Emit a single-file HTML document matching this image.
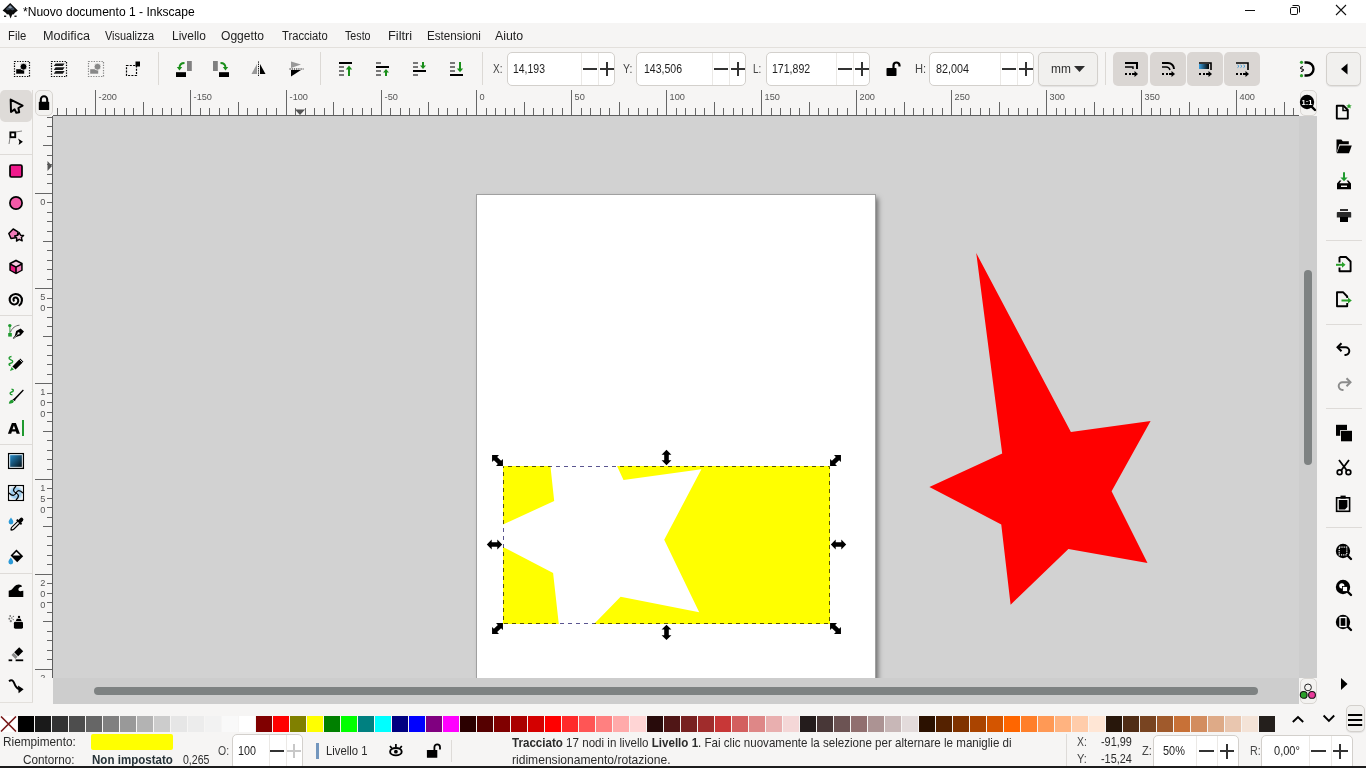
<!DOCTYPE html><html><head><meta charset="utf-8"><style>
html,body{margin:0;padding:0;width:1366px;height:768px;overflow:hidden;background:#f6f5f4;font-family:"Liberation Sans",sans-serif}
body{position:relative}
</style></head><body>
<div style="position:absolute;left:0px;top:0px;width:1366px;height:23px;background:#ffffff;"></div>
<div style="position:absolute;left:0px;top:23px;width:1366px;height:745px;background:#f6f5f4;"></div>
<div style="position:absolute;left:0px;top:47px;width:1366px;height:1px;background:#e3e0dc;"></div>
<svg style="position:absolute;left:2px;top:2px" width="17" height="17" viewBox="0 0 17 17"><path d="M8.2 1 L15.8 8.4 L12.6 11 L12 12.2 L10.2 12.4 L8.6 16.4 L7 12.4 L4.8 12.2 L4 11 L0.6 8.4 Z" fill="#0b0b0b"/>
<path d="M8.2 2.8 L12.8 7.3 L10.5 8.6 L8.2 7.2 L5.9 8.6 L3.6 7.3Z" fill="#3d4a5a"/><path d="M8.2 3.6 L10.2 5.6 L8.2 6.4 L6.2 5.6Z" fill="#8a98a8"/>
<rect x="2" y="13.6" width="2.2" height="1.3" fill="#111"/><rect x="12.4" y="13.6" width="2.2" height="1.3" fill="#111"/></svg>
<div id="t0" style="position:absolute;left:23.4px;top:5.60px;font-size:12.4px;line-height:12.4px;font-weight:400;color:#000;white-space:nowrap;transform:scaleX(0.9737);transform-origin:0 0;">*Nuovo documento 1 - Inkscape</div>
<div style="position:absolute;left:1245px;top:10px;width:10px;height:1px;background:#111;"></div>
<svg style="position:absolute;left:1289px;top:4px" width="12" height="12" viewBox="0 0 12 12"><rect x="1.5" y="3.5" width="7" height="7" rx="1.2" fill="none" stroke="#111" stroke-width="1"/><path d="M3.5 1.5 H9 a1.5 1.5 0 0 1 1.5 1.5 V8.5" fill="none" stroke="#111" stroke-width="1"/></svg>
<svg style="position:absolute;left:1335px;top:4px" width="12" height="12" viewBox="0 0 12 12"><path d="M1 1 L11 11 M11 1 L1 11" stroke="#111" stroke-width="1.1"/></svg>
<div id="t1" style="position:absolute;left:8.3px;top:29.69px;font-size:12.3px;line-height:12.3px;font-weight:400;color:#1e1e1e;white-space:nowrap;transform:scaleX(0.9170);transform-origin:0 0;">File</div>
<div id="t2" style="position:absolute;left:42.5px;top:29.69px;font-size:12.3px;line-height:12.3px;font-weight:400;color:#1e1e1e;white-space:nowrap;transform:scaleX(1.0256);transform-origin:0 0;">Modifica</div>
<div id="t3" style="position:absolute;left:105.4px;top:29.69px;font-size:12.3px;line-height:12.3px;font-weight:400;color:#1e1e1e;white-space:nowrap;transform:scaleX(0.8897);transform-origin:0 0;">Visualizza</div>
<div id="t4" style="position:absolute;left:171.6px;top:29.69px;font-size:12.3px;line-height:12.3px;font-weight:400;color:#1e1e1e;white-space:nowrap;transform:scaleX(0.9700);transform-origin:0 0;">Livello</div>
<div id="t5" style="position:absolute;left:221.4px;top:29.69px;font-size:12.3px;line-height:12.3px;font-weight:400;color:#1e1e1e;white-space:nowrap;transform:scaleX(0.9814);transform-origin:0 0;">Oggetto</div>
<div id="t6" style="position:absolute;left:281.9px;top:29.69px;font-size:12.3px;line-height:12.3px;font-weight:400;color:#1e1e1e;white-space:nowrap;transform:scaleX(0.9110);transform-origin:0 0;">Tracciato</div>
<div id="t7" style="position:absolute;left:345.1px;top:29.69px;font-size:12.3px;line-height:12.3px;font-weight:400;color:#1e1e1e;white-space:nowrap;transform:scaleX(0.8697);transform-origin:0 0;">Testo</div>
<div id="t8" style="position:absolute;left:387.6px;top:29.69px;font-size:12.3px;line-height:12.3px;font-weight:400;color:#1e1e1e;white-space:nowrap;transform:scaleX(1.0425);transform-origin:0 0;">Filtri</div>
<div id="t9" style="position:absolute;left:426.7px;top:29.69px;font-size:12.3px;line-height:12.3px;font-weight:400;color:#1e1e1e;white-space:nowrap;transform:scaleX(0.9490);transform-origin:0 0;">Estensioni</div>
<div id="t10" style="position:absolute;left:495.3px;top:29.69px;font-size:12.3px;line-height:12.3px;font-weight:400;color:#1e1e1e;white-space:nowrap;transform:scaleX(1.0039);transform-origin:0 0;">Aiuto</div>
<div style="position:absolute;left:53px;top:116px;width:1246px;height:562px;background:#d2d2d2;"></div>
<div style="position:absolute;left:1299px;top:116px;width:18px;height:562px;background:#cdcdcd;"></div>
<div style="position:absolute;left:53px;top:678px;width:1246px;height:26px;background:#cdcdcd;"></div>
<div style="position:absolute;left:1304px;top:269.5px;width:8px;height:195.5px;background:#7e8282;border-radius:4px"></div>
<div style="position:absolute;left:94px;top:687px;width:1164px;height:8px;background:#7e8282;border-radius:4px"></div>
<div style="position:absolute;left:53px;top:116px;width:1246px;height:562px;overflow:hidden">
<div style="position:absolute;left:423px;top:78px;width:398px;height:566px;background:#fff;border:1px solid #a0a0a0;box-shadow:3px 3px 5px -1px rgba(0,0,0,0.5)"></div>
</div>
<svg style="position:absolute;left:0px;top:0px" width="1366" height="768" viewBox="0 0 1366 768"><defs><clipPath id="rc"><rect x="503" y="466" width="327" height="158"/></clipPath></defs>
<rect x="503" y="466" width="327" height="158" fill="#ffff00"/>
<polygon clip-path="url(#rc)" points="547.6,440 554.2,501 480,535 553.1,572.9 561.7,650 568.6,650 620.6,596.8 699.2,612.3 664.2,539.7 701.4,469.3 623.5,479.9 595.6,420" fill="#fff"/>
<polygon points="976.25,253.1 1070.9,432 1150.6,421.1 1111.6,491.25 1147.5,563.1 1068.4,549.1 1010.6,604.7 1001.25,524.4 929.4,486.9 1002.2,453.6" fill="#ff0000"/>
<rect x="503.5" y="466.5" width="326" height="157" fill="none" stroke="#5a5590" stroke-width="1" stroke-dasharray="4 4" stroke-dashoffset="3.5" style="mix-blend-mode:multiply"/>
</svg>
<svg style="position:absolute;left:0px;top:0px" width="1366" height="768" viewBox="0 0 1366 768"><path d="M0,-7.7 L4.9,-2.8 L2.3,-2.8 L2.3,2.8 L4.9,2.8 L0,7.7 L-4.9,2.8 L-2.3,2.8 L-2.3,-2.8 L-4.9,-2.8 Z" fill="#000" transform="translate(497.5,460.5) rotate(-45)"/><path d="M0,-7.7 L4.9,-2.8 L2.3,-2.8 L2.3,2.8 L4.9,2.8 L0,7.7 L-4.9,2.8 L-2.3,2.8 L-2.3,-2.8 L-4.9,-2.8 Z" fill="#000" transform="translate(835.5,460.5) rotate(45)"/><path d="M0,-7.7 L4.9,-2.8 L2.3,-2.8 L2.3,2.8 L4.9,2.8 L0,7.7 L-4.9,2.8 L-2.3,2.8 L-2.3,-2.8 L-4.9,-2.8 Z" fill="#000" transform="translate(497.5,628.5) rotate(45)"/><path d="M0,-7.7 L4.9,-2.8 L2.3,-2.8 L2.3,2.8 L4.9,2.8 L0,7.7 L-4.9,2.8 L-2.3,2.8 L-2.3,-2.8 L-4.9,-2.8 Z" fill="#000" transform="translate(835.5,628.5) rotate(-45)"/><path d="M0,-7.7 L4.9,-2.8 L2.3,-2.8 L2.3,2.8 L4.9,2.8 L0,7.7 L-4.9,2.8 L-2.3,2.8 L-2.3,-2.8 L-4.9,-2.8 Z" fill="#000" transform="translate(666.5,457.5) rotate(0)"/><path d="M0,-7.7 L4.9,-2.8 L2.3,-2.8 L2.3,2.8 L4.9,2.8 L0,7.7 L-4.9,2.8 L-2.3,2.8 L-2.3,-2.8 L-4.9,-2.8 Z" fill="#000" transform="translate(666.5,632.4) rotate(0)"/><path d="M0,-7.7 L4.9,-2.8 L2.3,-2.8 L2.3,2.8 L4.9,2.8 L0,7.7 L-4.9,2.8 L-2.3,2.8 L-2.3,-2.8 L-4.9,-2.8 Z" fill="#000" transform="translate(494.5,544.5) rotate(90)"/><path d="M0,-7.7 L4.9,-2.8 L2.3,-2.8 L2.3,2.8 L4.9,2.8 L0,7.7 L-4.9,2.8 L-2.3,2.8 L-2.3,-2.8 L-4.9,-2.8 Z" fill="#000" transform="translate(838.5,544.5) rotate(90)"/></svg>
<div style="position:absolute;left:32px;top:90px;width:1px;height:613px;background:#dddad6;"></div>
<div style="position:absolute;left:0px;top:702px;width:33px;height:1px;background:#e3e0dc;"></div>
<div style="position:absolute;left:0px;top:90px;width:31.5px;height:31.5px;background:#dedbd8;border-radius:5px"></div>
<div style="position:absolute;left:0px;top:154px;width:32px;height:1px;background:#dedbd8;"></div>
<div style="position:absolute;left:0px;top:315px;width:32px;height:1px;background:#dedbd8;"></div>
<div style="position:absolute;left:0px;top:444px;width:32px;height:1px;background:#dedbd8;"></div>
<div style="position:absolute;left:0px;top:573px;width:32px;height:1px;background:#dedbd8;"></div>
<svg style="position:absolute;left:0px;top:0px" width="1366" height="768" viewBox="0 0 1366 768"><rect x="53" y="115" width="1246" height="1" fill="#5e5e5e"/><rect x="52" y="116" width="1" height="562" fill="#5e5e5e"/><line x1="57.5" y1="108" x2="57.5" y2="115" stroke="#666" stroke-width="1"/><line x1="66.5" y1="108" x2="66.5" y2="115" stroke="#666" stroke-width="1"/><line x1="76.5" y1="108" x2="76.5" y2="115" stroke="#666" stroke-width="1"/><line x1="85.5" y1="108" x2="85.5" y2="115" stroke="#666" stroke-width="1"/><line x1="95.5" y1="90" x2="95.5" y2="115" stroke="#666" stroke-width="1"/><line x1="105.5" y1="108" x2="105.5" y2="115" stroke="#666" stroke-width="1"/><line x1="114.5" y1="108" x2="114.5" y2="115" stroke="#666" stroke-width="1"/><line x1="124.5" y1="108" x2="124.5" y2="115" stroke="#666" stroke-width="1"/><line x1="133.5" y1="108" x2="133.5" y2="115" stroke="#666" stroke-width="1"/><line x1="143.5" y1="102" x2="143.5" y2="115" stroke="#666" stroke-width="1"/><line x1="152.5" y1="108" x2="152.5" y2="115" stroke="#666" stroke-width="1"/><line x1="162.5" y1="108" x2="162.5" y2="115" stroke="#666" stroke-width="1"/><line x1="171.5" y1="108" x2="171.5" y2="115" stroke="#666" stroke-width="1"/><line x1="181.5" y1="108" x2="181.5" y2="115" stroke="#666" stroke-width="1"/><line x1="190.5" y1="90" x2="190.5" y2="115" stroke="#666" stroke-width="1"/><line x1="200.5" y1="108" x2="200.5" y2="115" stroke="#666" stroke-width="1"/><line x1="209.5" y1="108" x2="209.5" y2="115" stroke="#666" stroke-width="1"/><line x1="219.5" y1="108" x2="219.5" y2="115" stroke="#666" stroke-width="1"/><line x1="228.5" y1="108" x2="228.5" y2="115" stroke="#666" stroke-width="1"/><line x1="238.5" y1="102" x2="238.5" y2="115" stroke="#666" stroke-width="1"/><line x1="247.5" y1="108" x2="247.5" y2="115" stroke="#666" stroke-width="1"/><line x1="257.5" y1="108" x2="257.5" y2="115" stroke="#666" stroke-width="1"/><line x1="266.5" y1="108" x2="266.5" y2="115" stroke="#666" stroke-width="1"/><line x1="276.5" y1="108" x2="276.5" y2="115" stroke="#666" stroke-width="1"/><line x1="286.5" y1="90" x2="286.5" y2="115" stroke="#666" stroke-width="1"/><line x1="295.5" y1="108" x2="295.5" y2="115" stroke="#666" stroke-width="1"/><line x1="305.5" y1="108" x2="305.5" y2="115" stroke="#666" stroke-width="1"/><line x1="314.5" y1="108" x2="314.5" y2="115" stroke="#666" stroke-width="1"/><line x1="324.5" y1="108" x2="324.5" y2="115" stroke="#666" stroke-width="1"/><line x1="333.5" y1="102" x2="333.5" y2="115" stroke="#666" stroke-width="1"/><line x1="343.5" y1="108" x2="343.5" y2="115" stroke="#666" stroke-width="1"/><line x1="352.5" y1="108" x2="352.5" y2="115" stroke="#666" stroke-width="1"/><line x1="362.5" y1="108" x2="362.5" y2="115" stroke="#666" stroke-width="1"/><line x1="371.5" y1="108" x2="371.5" y2="115" stroke="#666" stroke-width="1"/><line x1="381.5" y1="90" x2="381.5" y2="115" stroke="#666" stroke-width="1"/><line x1="390.5" y1="108" x2="390.5" y2="115" stroke="#666" stroke-width="1"/><line x1="400.5" y1="108" x2="400.5" y2="115" stroke="#666" stroke-width="1"/><line x1="409.5" y1="108" x2="409.5" y2="115" stroke="#666" stroke-width="1"/><line x1="419.5" y1="108" x2="419.5" y2="115" stroke="#666" stroke-width="1"/><line x1="428.5" y1="102" x2="428.5" y2="115" stroke="#666" stroke-width="1"/><line x1="438.5" y1="108" x2="438.5" y2="115" stroke="#666" stroke-width="1"/><line x1="447.5" y1="108" x2="447.5" y2="115" stroke="#666" stroke-width="1"/><line x1="457.5" y1="108" x2="457.5" y2="115" stroke="#666" stroke-width="1"/><line x1="466.5" y1="108" x2="466.5" y2="115" stroke="#666" stroke-width="1"/><line x1="476.5" y1="90" x2="476.5" y2="115" stroke="#666" stroke-width="1"/><line x1="486.5" y1="108" x2="486.5" y2="115" stroke="#666" stroke-width="1"/><line x1="495.5" y1="108" x2="495.5" y2="115" stroke="#666" stroke-width="1"/><line x1="505.5" y1="108" x2="505.5" y2="115" stroke="#666" stroke-width="1"/><line x1="514.5" y1="108" x2="514.5" y2="115" stroke="#666" stroke-width="1"/><line x1="524.5" y1="102" x2="524.5" y2="115" stroke="#666" stroke-width="1"/><line x1="533.5" y1="108" x2="533.5" y2="115" stroke="#666" stroke-width="1"/><line x1="543.5" y1="108" x2="543.5" y2="115" stroke="#666" stroke-width="1"/><line x1="552.5" y1="108" x2="552.5" y2="115" stroke="#666" stroke-width="1"/><line x1="562.5" y1="108" x2="562.5" y2="115" stroke="#666" stroke-width="1"/><line x1="571.5" y1="90" x2="571.5" y2="115" stroke="#666" stroke-width="1"/><line x1="581.5" y1="108" x2="581.5" y2="115" stroke="#666" stroke-width="1"/><line x1="590.5" y1="108" x2="590.5" y2="115" stroke="#666" stroke-width="1"/><line x1="600.5" y1="108" x2="600.5" y2="115" stroke="#666" stroke-width="1"/><line x1="609.5" y1="108" x2="609.5" y2="115" stroke="#666" stroke-width="1"/><line x1="619.5" y1="102" x2="619.5" y2="115" stroke="#666" stroke-width="1"/><line x1="628.5" y1="108" x2="628.5" y2="115" stroke="#666" stroke-width="1"/><line x1="638.5" y1="108" x2="638.5" y2="115" stroke="#666" stroke-width="1"/><line x1="647.5" y1="108" x2="647.5" y2="115" stroke="#666" stroke-width="1"/><line x1="657.5" y1="108" x2="657.5" y2="115" stroke="#666" stroke-width="1"/><line x1="666.5" y1="90" x2="666.5" y2="115" stroke="#666" stroke-width="1"/><line x1="676.5" y1="108" x2="676.5" y2="115" stroke="#666" stroke-width="1"/><line x1="685.5" y1="108" x2="685.5" y2="115" stroke="#666" stroke-width="1"/><line x1="695.5" y1="108" x2="695.5" y2="115" stroke="#666" stroke-width="1"/><line x1="704.5" y1="108" x2="704.5" y2="115" stroke="#666" stroke-width="1"/><line x1="714.5" y1="102" x2="714.5" y2="115" stroke="#666" stroke-width="1"/><line x1="723.5" y1="108" x2="723.5" y2="115" stroke="#666" stroke-width="1"/><line x1="733.5" y1="108" x2="733.5" y2="115" stroke="#666" stroke-width="1"/><line x1="742.5" y1="108" x2="742.5" y2="115" stroke="#666" stroke-width="1"/><line x1="752.5" y1="108" x2="752.5" y2="115" stroke="#666" stroke-width="1"/><line x1="761.5" y1="90" x2="761.5" y2="115" stroke="#666" stroke-width="1"/><line x1="771.5" y1="108" x2="771.5" y2="115" stroke="#666" stroke-width="1"/><line x1="780.5" y1="108" x2="780.5" y2="115" stroke="#666" stroke-width="1"/><line x1="790.5" y1="108" x2="790.5" y2="115" stroke="#666" stroke-width="1"/><line x1="799.5" y1="108" x2="799.5" y2="115" stroke="#666" stroke-width="1"/><line x1="809.5" y1="102" x2="809.5" y2="115" stroke="#666" stroke-width="1"/><line x1="818.5" y1="108" x2="818.5" y2="115" stroke="#666" stroke-width="1"/><line x1="828.5" y1="108" x2="828.5" y2="115" stroke="#666" stroke-width="1"/><line x1="837.5" y1="108" x2="837.5" y2="115" stroke="#666" stroke-width="1"/><line x1="847.5" y1="108" x2="847.5" y2="115" stroke="#666" stroke-width="1"/><line x1="856.5" y1="90" x2="856.5" y2="115" stroke="#666" stroke-width="1"/><line x1="866.5" y1="108" x2="866.5" y2="115" stroke="#666" stroke-width="1"/><line x1="875.5" y1="108" x2="875.5" y2="115" stroke="#666" stroke-width="1"/><line x1="885.5" y1="108" x2="885.5" y2="115" stroke="#666" stroke-width="1"/><line x1="894.5" y1="108" x2="894.5" y2="115" stroke="#666" stroke-width="1"/><line x1="904.5" y1="102" x2="904.5" y2="115" stroke="#666" stroke-width="1"/><line x1="913.5" y1="108" x2="913.5" y2="115" stroke="#666" stroke-width="1"/><line x1="923.5" y1="108" x2="923.5" y2="115" stroke="#666" stroke-width="1"/><line x1="932.5" y1="108" x2="932.5" y2="115" stroke="#666" stroke-width="1"/><line x1="942.5" y1="108" x2="942.5" y2="115" stroke="#666" stroke-width="1"/><line x1="951.5" y1="90" x2="951.5" y2="115" stroke="#666" stroke-width="1"/><line x1="961.5" y1="108" x2="961.5" y2="115" stroke="#666" stroke-width="1"/><line x1="970.5" y1="108" x2="970.5" y2="115" stroke="#666" stroke-width="1"/><line x1="980.5" y1="108" x2="980.5" y2="115" stroke="#666" stroke-width="1"/><line x1="989.5" y1="108" x2="989.5" y2="115" stroke="#666" stroke-width="1"/><line x1="999.5" y1="102" x2="999.5" y2="115" stroke="#666" stroke-width="1"/><line x1="1008.5" y1="108" x2="1008.5" y2="115" stroke="#666" stroke-width="1"/><line x1="1018.5" y1="108" x2="1018.5" y2="115" stroke="#666" stroke-width="1"/><line x1="1027.5" y1="108" x2="1027.5" y2="115" stroke="#666" stroke-width="1"/><line x1="1037.5" y1="108" x2="1037.5" y2="115" stroke="#666" stroke-width="1"/><line x1="1046.5" y1="90" x2="1046.5" y2="115" stroke="#666" stroke-width="1"/><line x1="1056.5" y1="108" x2="1056.5" y2="115" stroke="#666" stroke-width="1"/><line x1="1065.5" y1="108" x2="1065.5" y2="115" stroke="#666" stroke-width="1"/><line x1="1075.5" y1="108" x2="1075.5" y2="115" stroke="#666" stroke-width="1"/><line x1="1084.5" y1="108" x2="1084.5" y2="115" stroke="#666" stroke-width="1"/><line x1="1094.5" y1="102" x2="1094.5" y2="115" stroke="#666" stroke-width="1"/><line x1="1103.5" y1="108" x2="1103.5" y2="115" stroke="#666" stroke-width="1"/><line x1="1113.5" y1="108" x2="1113.5" y2="115" stroke="#666" stroke-width="1"/><line x1="1122.5" y1="108" x2="1122.5" y2="115" stroke="#666" stroke-width="1"/><line x1="1132.5" y1="108" x2="1132.5" y2="115" stroke="#666" stroke-width="1"/><line x1="1141.5" y1="90" x2="1141.5" y2="115" stroke="#666" stroke-width="1"/><line x1="1151.5" y1="108" x2="1151.5" y2="115" stroke="#666" stroke-width="1"/><line x1="1160.5" y1="108" x2="1160.5" y2="115" stroke="#666" stroke-width="1"/><line x1="1170.5" y1="108" x2="1170.5" y2="115" stroke="#666" stroke-width="1"/><line x1="1179.5" y1="108" x2="1179.5" y2="115" stroke="#666" stroke-width="1"/><line x1="1189.5" y1="102" x2="1189.5" y2="115" stroke="#666" stroke-width="1"/><line x1="1198.5" y1="108" x2="1198.5" y2="115" stroke="#666" stroke-width="1"/><line x1="1208.5" y1="108" x2="1208.5" y2="115" stroke="#666" stroke-width="1"/><line x1="1217.5" y1="108" x2="1217.5" y2="115" stroke="#666" stroke-width="1"/><line x1="1227.5" y1="108" x2="1227.5" y2="115" stroke="#666" stroke-width="1"/><line x1="1236.5" y1="90" x2="1236.5" y2="115" stroke="#666" stroke-width="1"/><line x1="1246.5" y1="108" x2="1246.5" y2="115" stroke="#666" stroke-width="1"/><line x1="1255.5" y1="108" x2="1255.5" y2="115" stroke="#666" stroke-width="1"/><line x1="1265.5" y1="108" x2="1265.5" y2="115" stroke="#666" stroke-width="1"/><line x1="1274.5" y1="108" x2="1274.5" y2="115" stroke="#666" stroke-width="1"/><line x1="1284.5" y1="102" x2="1284.5" y2="115" stroke="#666" stroke-width="1"/><line x1="1293.5" y1="108" x2="1293.5" y2="115" stroke="#666" stroke-width="1"/><line x1="47" y1="117.5" x2="52" y2="117.5" stroke="#666" stroke-width="1"/><line x1="47" y1="126.5" x2="52" y2="126.5" stroke="#666" stroke-width="1"/><line x1="47" y1="136.5" x2="52" y2="136.5" stroke="#666" stroke-width="1"/><line x1="43" y1="145.5" x2="52" y2="145.5" stroke="#666" stroke-width="1"/><line x1="47" y1="155.5" x2="52" y2="155.5" stroke="#666" stroke-width="1"/><line x1="47" y1="164.5" x2="52" y2="164.5" stroke="#666" stroke-width="1"/><line x1="47" y1="174.5" x2="52" y2="174.5" stroke="#666" stroke-width="1"/><line x1="47" y1="183.5" x2="52" y2="183.5" stroke="#666" stroke-width="1"/><line x1="35" y1="193.5" x2="52" y2="193.5" stroke="#666" stroke-width="1"/><line x1="47" y1="202.5" x2="52" y2="202.5" stroke="#666" stroke-width="1"/><line x1="47" y1="212.5" x2="52" y2="212.5" stroke="#666" stroke-width="1"/><line x1="47" y1="221.5" x2="52" y2="221.5" stroke="#666" stroke-width="1"/><line x1="47" y1="231.5" x2="52" y2="231.5" stroke="#666" stroke-width="1"/><line x1="43" y1="241.5" x2="52" y2="241.5" stroke="#666" stroke-width="1"/><line x1="47" y1="250.5" x2="52" y2="250.5" stroke="#666" stroke-width="1"/><line x1="47" y1="260.5" x2="52" y2="260.5" stroke="#666" stroke-width="1"/><line x1="47" y1="269.5" x2="52" y2="269.5" stroke="#666" stroke-width="1"/><line x1="47" y1="279.5" x2="52" y2="279.5" stroke="#666" stroke-width="1"/><line x1="35" y1="288.5" x2="52" y2="288.5" stroke="#666" stroke-width="1"/><line x1="47" y1="298.5" x2="52" y2="298.5" stroke="#666" stroke-width="1"/><line x1="47" y1="307.5" x2="52" y2="307.5" stroke="#666" stroke-width="1"/><line x1="47" y1="317.5" x2="52" y2="317.5" stroke="#666" stroke-width="1"/><line x1="47" y1="326.5" x2="52" y2="326.5" stroke="#666" stroke-width="1"/><line x1="43" y1="336.5" x2="52" y2="336.5" stroke="#666" stroke-width="1"/><line x1="47" y1="345.5" x2="52" y2="345.5" stroke="#666" stroke-width="1"/><line x1="47" y1="355.5" x2="52" y2="355.5" stroke="#666" stroke-width="1"/><line x1="47" y1="364.5" x2="52" y2="364.5" stroke="#666" stroke-width="1"/><line x1="47" y1="374.5" x2="52" y2="374.5" stroke="#666" stroke-width="1"/><line x1="35" y1="383.5" x2="52" y2="383.5" stroke="#666" stroke-width="1"/><line x1="47" y1="393.5" x2="52" y2="393.5" stroke="#666" stroke-width="1"/><line x1="47" y1="402.5" x2="52" y2="402.5" stroke="#666" stroke-width="1"/><line x1="47" y1="412.5" x2="52" y2="412.5" stroke="#666" stroke-width="1"/><line x1="47" y1="421.5" x2="52" y2="421.5" stroke="#666" stroke-width="1"/><line x1="43" y1="431.5" x2="52" y2="431.5" stroke="#666" stroke-width="1"/><line x1="47" y1="440.5" x2="52" y2="440.5" stroke="#666" stroke-width="1"/><line x1="47" y1="450.5" x2="52" y2="450.5" stroke="#666" stroke-width="1"/><line x1="47" y1="459.5" x2="52" y2="459.5" stroke="#666" stroke-width="1"/><line x1="47" y1="469.5" x2="52" y2="469.5" stroke="#666" stroke-width="1"/><line x1="35" y1="479.5" x2="52" y2="479.5" stroke="#666" stroke-width="1"/><line x1="47" y1="488.5" x2="52" y2="488.5" stroke="#666" stroke-width="1"/><line x1="47" y1="498.5" x2="52" y2="498.5" stroke="#666" stroke-width="1"/><line x1="47" y1="507.5" x2="52" y2="507.5" stroke="#666" stroke-width="1"/><line x1="47" y1="517.5" x2="52" y2="517.5" stroke="#666" stroke-width="1"/><line x1="43" y1="526.5" x2="52" y2="526.5" stroke="#666" stroke-width="1"/><line x1="47" y1="536.5" x2="52" y2="536.5" stroke="#666" stroke-width="1"/><line x1="47" y1="545.5" x2="52" y2="545.5" stroke="#666" stroke-width="1"/><line x1="47" y1="555.5" x2="52" y2="555.5" stroke="#666" stroke-width="1"/><line x1="47" y1="564.5" x2="52" y2="564.5" stroke="#666" stroke-width="1"/><line x1="35" y1="574.5" x2="52" y2="574.5" stroke="#666" stroke-width="1"/><line x1="47" y1="583.5" x2="52" y2="583.5" stroke="#666" stroke-width="1"/><line x1="47" y1="593.5" x2="52" y2="593.5" stroke="#666" stroke-width="1"/><line x1="47" y1="602.5" x2="52" y2="602.5" stroke="#666" stroke-width="1"/><line x1="47" y1="612.5" x2="52" y2="612.5" stroke="#666" stroke-width="1"/><line x1="43" y1="621.5" x2="52" y2="621.5" stroke="#666" stroke-width="1"/><line x1="47" y1="631.5" x2="52" y2="631.5" stroke="#666" stroke-width="1"/><line x1="47" y1="640.5" x2="52" y2="640.5" stroke="#666" stroke-width="1"/><line x1="47" y1="650.5" x2="52" y2="650.5" stroke="#666" stroke-width="1"/><line x1="47" y1="659.5" x2="52" y2="659.5" stroke="#666" stroke-width="1"/><line x1="35" y1="669.5" x2="52" y2="669.5" stroke="#666" stroke-width="1"/></svg>
<div id="t11" style="position:absolute;left:98.6px;top:93.01px;font-size:9.2px;line-height:9.2px;font-weight:400;color:#555;white-space:nowrap;">-200</div>
<div id="t12" style="position:absolute;left:193.6px;top:93.01px;font-size:9.2px;line-height:9.2px;font-weight:400;color:#555;white-space:nowrap;">-150</div>
<div id="t13" style="position:absolute;left:289.6px;top:93.01px;font-size:9.2px;line-height:9.2px;font-weight:400;color:#555;white-space:nowrap;">-100</div>
<div id="t14" style="position:absolute;left:384.6px;top:93.01px;font-size:9.2px;line-height:9.2px;font-weight:400;color:#555;white-space:nowrap;">-50</div>
<div id="t15" style="position:absolute;left:479.6px;top:93.01px;font-size:9.2px;line-height:9.2px;font-weight:400;color:#555;white-space:nowrap;">0</div>
<div id="t16" style="position:absolute;left:574.6px;top:93.01px;font-size:9.2px;line-height:9.2px;font-weight:400;color:#555;white-space:nowrap;">50</div>
<div id="t17" style="position:absolute;left:669.6px;top:93.01px;font-size:9.2px;line-height:9.2px;font-weight:400;color:#555;white-space:nowrap;">100</div>
<div id="t18" style="position:absolute;left:764.6px;top:93.01px;font-size:9.2px;line-height:9.2px;font-weight:400;color:#555;white-space:nowrap;">150</div>
<div id="t19" style="position:absolute;left:859.6px;top:93.01px;font-size:9.2px;line-height:9.2px;font-weight:400;color:#555;white-space:nowrap;">200</div>
<div id="t20" style="position:absolute;left:954.6px;top:93.01px;font-size:9.2px;line-height:9.2px;font-weight:400;color:#555;white-space:nowrap;">250</div>
<div id="t21" style="position:absolute;left:1049.6px;top:93.01px;font-size:9.2px;line-height:9.2px;font-weight:400;color:#555;white-space:nowrap;">300</div>
<div id="t22" style="position:absolute;left:1144.6px;top:93.01px;font-size:9.2px;line-height:9.2px;font-weight:400;color:#555;white-space:nowrap;">350</div>
<div id="t23" style="position:absolute;left:1239.6px;top:93.01px;font-size:9.2px;line-height:9.2px;font-weight:400;color:#555;white-space:nowrap;">400</div>
<div style="position:absolute;left:33px;top:116px;width:19px;height:562px;overflow:hidden"><div style="position:absolute;left:-33px;top:-116px;width:1366px;height:768px">
<div id="t24" style="position:absolute;left:40.2px;top:197.91px;font-size:9.2px;line-height:9.2px;font-weight:400;color:#555;white-space:nowrap;">0</div>
<div id="t25" style="position:absolute;left:40.2px;top:293.11px;font-size:9.2px;line-height:9.2px;font-weight:400;color:#555;white-space:nowrap;">5</div>
<div id="t26" style="position:absolute;left:40.2px;top:304.11px;font-size:9.2px;line-height:9.2px;font-weight:400;color:#555;white-space:nowrap;">0</div>
<div id="t27" style="position:absolute;left:40.2px;top:388.31px;font-size:9.2px;line-height:9.2px;font-weight:400;color:#555;white-space:nowrap;">1</div>
<div id="t28" style="position:absolute;left:40.2px;top:399.31px;font-size:9.2px;line-height:9.2px;font-weight:400;color:#555;white-space:nowrap;">0</div>
<div id="t29" style="position:absolute;left:40.2px;top:410.31px;font-size:9.2px;line-height:9.2px;font-weight:400;color:#555;white-space:nowrap;">0</div>
<div id="t30" style="position:absolute;left:40.2px;top:483.51px;font-size:9.2px;line-height:9.2px;font-weight:400;color:#555;white-space:nowrap;">1</div>
<div id="t31" style="position:absolute;left:40.2px;top:494.51px;font-size:9.2px;line-height:9.2px;font-weight:400;color:#555;white-space:nowrap;">5</div>
<div id="t32" style="position:absolute;left:40.2px;top:505.51px;font-size:9.2px;line-height:9.2px;font-weight:400;color:#555;white-space:nowrap;">0</div>
<div id="t33" style="position:absolute;left:40.2px;top:578.71px;font-size:9.2px;line-height:9.2px;font-weight:400;color:#555;white-space:nowrap;">2</div>
<div id="t34" style="position:absolute;left:40.2px;top:589.71px;font-size:9.2px;line-height:9.2px;font-weight:400;color:#555;white-space:nowrap;">0</div>
<div id="t35" style="position:absolute;left:40.2px;top:600.71px;font-size:9.2px;line-height:9.2px;font-weight:400;color:#555;white-space:nowrap;">0</div>
<div id="t36" style="position:absolute;left:40.2px;top:673.91px;font-size:9.2px;line-height:9.2px;font-weight:400;color:#555;white-space:nowrap;">2</div>
<div id="t37" style="position:absolute;left:40.2px;top:684.91px;font-size:9.2px;line-height:9.2px;font-weight:400;color:#555;white-space:nowrap;">5</div>
<div id="t38" style="position:absolute;left:40.2px;top:695.91px;font-size:9.2px;line-height:9.2px;font-weight:400;color:#555;white-space:nowrap;">0</div>
</div></div>
<div style="position:absolute;left:0px;top:716px;width:17px;height:16px;background:#ffffff;"></div>
<svg style="position:absolute;left:0px;top:716px" width="17" height="16" viewBox="0 0 17 16"><path d="M1 0.5 L16 15.5 M16 0.5 L1 15.5" stroke="#7a1a1a" stroke-width="1.6"/></svg>
<div style="position:absolute;left:18.1px;top:716px;width:16px;height:16px;background:#000000;"></div>
<div style="position:absolute;left:35.1px;top:716px;width:16px;height:16px;background:#1a1a1a;"></div>
<div style="position:absolute;left:52.1px;top:716px;width:16px;height:16px;background:#333333;"></div>
<div style="position:absolute;left:69.1px;top:716px;width:16px;height:16px;background:#4d4d4d;"></div>
<div style="position:absolute;left:86.1px;top:716px;width:16px;height:16px;background:#666666;"></div>
<div style="position:absolute;left:103.1px;top:716px;width:16px;height:16px;background:#808080;"></div>
<div style="position:absolute;left:120.1px;top:716px;width:16px;height:16px;background:#999999;"></div>
<div style="position:absolute;left:137.1px;top:716px;width:16px;height:16px;background:#b3b3b3;"></div>
<div style="position:absolute;left:154.1px;top:716px;width:16px;height:16px;background:#cccccc;"></div>
<div style="position:absolute;left:171.1px;top:716px;width:16px;height:16px;background:#e6e6e6;"></div>
<div style="position:absolute;left:188.1px;top:716px;width:16px;height:16px;background:#ececec;"></div>
<div style="position:absolute;left:205.1px;top:716px;width:16px;height:16px;background:#f2f2f2;"></div>
<div style="position:absolute;left:222.1px;top:716px;width:16px;height:16px;background:#f9f9f9;"></div>
<div style="position:absolute;left:239.1px;top:716px;width:16px;height:16px;background:#ffffff;"></div>
<div style="position:absolute;left:256.1px;top:716px;width:16px;height:16px;background:#800000;"></div>
<div style="position:absolute;left:273.1px;top:716px;width:16px;height:16px;background:#ff0000;"></div>
<div style="position:absolute;left:290.1px;top:716px;width:16px;height:16px;background:#808000;"></div>
<div style="position:absolute;left:307.2px;top:716px;width:16px;height:16px;background:#ffff00;"></div>
<div style="position:absolute;left:324.2px;top:716px;width:16px;height:16px;background:#008000;"></div>
<div style="position:absolute;left:341.2px;top:716px;width:16px;height:16px;background:#00ff00;"></div>
<div style="position:absolute;left:358.2px;top:716px;width:16px;height:16px;background:#008080;"></div>
<div style="position:absolute;left:375.2px;top:716px;width:16px;height:16px;background:#00ffff;"></div>
<div style="position:absolute;left:392.2px;top:716px;width:16px;height:16px;background:#000080;"></div>
<div style="position:absolute;left:409.2px;top:716px;width:16px;height:16px;background:#0000ff;"></div>
<div style="position:absolute;left:426.2px;top:716px;width:16px;height:16px;background:#800080;"></div>
<div style="position:absolute;left:443.2px;top:716px;width:16px;height:16px;background:#ff00ff;"></div>
<div style="position:absolute;left:460.2px;top:716px;width:16px;height:16px;background:#2b0000;"></div>
<div style="position:absolute;left:477.2px;top:716px;width:16px;height:16px;background:#550000;"></div>
<div style="position:absolute;left:494.2px;top:716px;width:16px;height:16px;background:#800000;"></div>
<div style="position:absolute;left:511.2px;top:716px;width:16px;height:16px;background:#aa0000;"></div>
<div style="position:absolute;left:528.2px;top:716px;width:16px;height:16px;background:#d40000;"></div>
<div style="position:absolute;left:545.2px;top:716px;width:16px;height:16px;background:#ff0000;"></div>
<div style="position:absolute;left:562.2px;top:716px;width:16px;height:16px;background:#ff2a2a;"></div>
<div style="position:absolute;left:579.2px;top:716px;width:16px;height:16px;background:#ff5555;"></div>
<div style="position:absolute;left:596.2px;top:716px;width:16px;height:16px;background:#ff8080;"></div>
<div style="position:absolute;left:613.2px;top:716px;width:16px;height:16px;background:#ffaaaa;"></div>
<div style="position:absolute;left:630.2px;top:716px;width:16px;height:16px;background:#ffd5d5;"></div>
<div style="position:absolute;left:647.2px;top:716px;width:16px;height:16px;background:#280b0b;"></div>
<div style="position:absolute;left:664.2px;top:716px;width:16px;height:16px;background:#501616;"></div>
<div style="position:absolute;left:681.2px;top:716px;width:16px;height:16px;background:#782121;"></div>
<div style="position:absolute;left:698.2px;top:716px;width:16px;height:16px;background:#a02c2c;"></div>
<div style="position:absolute;left:715.2px;top:716px;width:16px;height:16px;background:#c83737;"></div>
<div style="position:absolute;left:732.2px;top:716px;width:16px;height:16px;background:#d35f5f;"></div>
<div style="position:absolute;left:749.2px;top:716px;width:16px;height:16px;background:#de8787;"></div>
<div style="position:absolute;left:766.2px;top:716px;width:16px;height:16px;background:#e9afaf;"></div>
<div style="position:absolute;left:783.2px;top:716px;width:16px;height:16px;background:#f4d7d7;"></div>
<div style="position:absolute;left:800.2px;top:716px;width:16px;height:16px;background:#241c1c;"></div>
<div style="position:absolute;left:817.2px;top:716px;width:16px;height:16px;background:#483737;"></div>
<div style="position:absolute;left:834.2px;top:716px;width:16px;height:16px;background:#6c5353;"></div>
<div style="position:absolute;left:851.2px;top:716px;width:16px;height:16px;background:#916f6f;"></div>
<div style="position:absolute;left:868.2px;top:716px;width:16px;height:16px;background:#ac9393;"></div>
<div style="position:absolute;left:885.3px;top:716px;width:16px;height:16px;background:#c8b7b7;"></div>
<div style="position:absolute;left:902.3px;top:716px;width:16px;height:16px;background:#e3dbdb;"></div>
<div style="position:absolute;left:919.3px;top:716px;width:16px;height:16px;background:#2b1100;"></div>
<div style="position:absolute;left:936.3px;top:716px;width:16px;height:16px;background:#552200;"></div>
<div style="position:absolute;left:953.3px;top:716px;width:16px;height:16px;background:#803300;"></div>
<div style="position:absolute;left:970.3px;top:716px;width:16px;height:16px;background:#aa4400;"></div>
<div style="position:absolute;left:987.3px;top:716px;width:16px;height:16px;background:#d45500;"></div>
<div style="position:absolute;left:1004.3px;top:716px;width:16px;height:16px;background:#ff6600;"></div>
<div style="position:absolute;left:1021.3px;top:716px;width:16px;height:16px;background:#ff7f2a;"></div>
<div style="position:absolute;left:1038.3px;top:716px;width:16px;height:16px;background:#ff9955;"></div>
<div style="position:absolute;left:1055.3px;top:716px;width:16px;height:16px;background:#ffb380;"></div>
<div style="position:absolute;left:1072.3px;top:716px;width:16px;height:16px;background:#ffccaa;"></div>
<div style="position:absolute;left:1089.3px;top:716px;width:16px;height:16px;background:#ffe6d5;"></div>
<div style="position:absolute;left:1106.3px;top:716px;width:16px;height:16px;background:#28170b;"></div>
<div style="position:absolute;left:1123.3px;top:716px;width:16px;height:16px;background:#502d16;"></div>
<div style="position:absolute;left:1140.3px;top:716px;width:16px;height:16px;background:#784421;"></div>
<div style="position:absolute;left:1157.3px;top:716px;width:16px;height:16px;background:#a05a2c;"></div>
<div style="position:absolute;left:1174.3px;top:716px;width:16px;height:16px;background:#c87137;"></div>
<div style="position:absolute;left:1191.3px;top:716px;width:16px;height:16px;background:#d38d5f;"></div>
<div style="position:absolute;left:1208.3px;top:716px;width:16px;height:16px;background:#deaa87;"></div>
<div style="position:absolute;left:1225.3px;top:716px;width:16px;height:16px;background:#e9c6af;"></div>
<div style="position:absolute;left:1242.3px;top:716px;width:16px;height:16px;background:#f4e3d7;"></div>
<div style="position:absolute;left:1259.3px;top:716px;width:16px;height:16px;background:#241f1c;"></div>
<svg style="position:absolute;left:13px;top:60px" width="18" height="18" viewBox="0 0 18 18"><rect x="1.5" y="1.5" width="15" height="15" fill="none" stroke="#000" stroke-width="1.2" stroke-dasharray="1.3 1.3"/><rect x="3.2" y="9.2" width="8" height="4.5" fill="#000"/><circle cx="10.5" cy="6.7" r="3.4" fill="#000" stroke="#f6f5f4" stroke-width="0.8"/></svg>
<svg style="position:absolute;left:50px;top:60px" width="18" height="18" viewBox="0 0 18 18"><rect x="1.5" y="1.5" width="15" height="15" fill="none" stroke="#000" stroke-width="1.2" stroke-dasharray="1.3 1.3"/><path d="M5.6 3.4 H14.6 L12.8 6.1 H3.8Z M5.6 7.2 H14.6 L12.8 9.9 H3.8Z M5.6 11 H14.6 L12.8 13.7 H3.8Z" fill="#1a1a1a"/></svg>
<svg style="position:absolute;left:87px;top:60px" width="18" height="18" viewBox="0 0 18 18"><rect x="1.5" y="1.5" width="15" height="15" fill="none" stroke="#888" stroke-width="1.2" stroke-dasharray="1.3 1.3"/><rect x="3.2" y="9.2" width="8" height="4.5" fill="#888"/><circle cx="10.5" cy="6.7" r="3.4" fill="#888" stroke="#f6f5f4" stroke-width="0.8"/></svg>
<svg style="position:absolute;left:125px;top:60px" width="18" height="18" viewBox="0 0 18 18"><rect x="1.5" y="5.5" width="10" height="10" fill="none" stroke="#000" stroke-width="1.2" stroke-dasharray="2 1.3"/><rect x="10.5" y="1.5" width="4.5" height="5" fill="#000"/></svg>
<div style="position:absolute;left:158px;top:52px;width:1px;height:33px;background:#dcd9d5;"></div>
<svg style="position:absolute;left:175px;top:60px" width="18" height="18" viewBox="0 0 18 18"><rect x="1" y="12.2" width="10" height="4.8" fill="#000"/><rect x="12" y="1" width="4.8" height="10" fill="#808080"/><path d="M9.5 3 C6 3 4.5 5 4.5 8" fill="none" stroke="#1a8f1a" stroke-width="1.9"/><path d="M1.8 7 L7.2 7 L4.5 10.5Z" fill="#1a8f1a"/></svg>
<svg style="position:absolute;left:212px;top:60px" width="18" height="18" viewBox="0 0 18 18"><rect x="7" y="12.2" width="10" height="4.8" fill="#000"/><rect x="1" y="1" width="4.8" height="10" fill="#808080"/><path d="M8.5 3 C12 3 13.5 5 13.5 8" fill="none" stroke="#1a8f1a" stroke-width="1.9"/><path d="M10.8 7 L16.2 7 L13.5 10.5Z" fill="#1a8f1a"/></svg>
<svg style="position:absolute;left:250px;top:60px" width="18" height="18" viewBox="0 0 18 18"><path d="M7 4 L7 14 L1.5 14Z" fill="#999"/><path d="M10 4 L10 14 L15.5 14Z" fill="#000"/><path d="M8.5 1.5 V16.5" stroke="#000" stroke-width="1" stroke-dasharray="1.2 1"/></svg>
<svg style="position:absolute;left:289px;top:60px" width="18" height="18" viewBox="0 0 18 18"><path d="M2 1.5 L12 4.5 L2 8Z" fill="#999"/><path d="M2 10 L12 10 L2 16.5Z" fill="#000"/><path d="M0.5 9 H14.5" stroke="#000" stroke-width="1" stroke-dasharray="1.2 1"/></svg>
<div style="position:absolute;left:320px;top:52px;width:1px;height:33px;background:#dcd9d5;"></div>
<svg style="position:absolute;left:338px;top:60px" width="16" height="18" viewBox="0 0 16 18"><rect x="1" y="2" width="13" height="2" fill="#000"/><rect x="1" y="6" width="5" height="2" fill="#777"/><rect x="1" y="10" width="5" height="2" fill="#777"/><rect x="1" y="14" width="5" height="2" fill="#777"/><path d="M11 16 V8" stroke="#1a8f1a" stroke-width="2"/><path d="M7.8 9.5 L11 5.5 L14.2 9.5Z" fill="#1a8f1a"/></svg>
<svg style="position:absolute;left:375px;top:60px" width="16" height="18" viewBox="0 0 16 18"><rect x="1" y="2" width="5" height="2" fill="#777"/><rect x="1" y="6" width="13" height="2" fill="#000"/><rect x="1" y="10" width="5" height="2" fill="#777"/><rect x="1" y="14" width="5" height="2" fill="#777"/><path d="M11 16 V11.5" stroke="#1a8f1a" stroke-width="2"/><path d="M8 12.5 L11 9 L14 12.5Z" fill="#1a8f1a"/></svg>
<svg style="position:absolute;left:412px;top:60px" width="16" height="18" viewBox="0 0 16 18"><rect x="1" y="2" width="5" height="2" fill="#777"/><rect x="1" y="6" width="5" height="2" fill="#777"/><rect x="1" y="10" width="13" height="2" fill="#000"/><rect x="1" y="14" width="5" height="2" fill="#777"/><path d="M11 2 V6" stroke="#1a8f1a" stroke-width="2"/><path d="M8 5.5 L11 9 L14 5.5Z" fill="#1a8f1a"/></svg>
<svg style="position:absolute;left:449px;top:60px" width="16" height="18" viewBox="0 0 16 18"><rect x="1" y="2" width="5" height="2" fill="#777"/><rect x="1" y="6" width="5" height="2" fill="#777"/><rect x="1" y="10" width="5" height="2" fill="#777"/><rect x="1" y="14" width="13" height="2" fill="#000"/><path d="M11 2 V9" stroke="#1a8f1a" stroke-width="2"/><path d="M7.8 8.5 L11 12.3 L14.2 8.5Z" fill="#1a8f1a"/></svg>
<div style="position:absolute;left:482px;top:52px;width:1px;height:33px;background:#dcd9d5;"></div>
<div style="position:absolute;left:507px;top:52px;width:106px;height:32px;background:#fff;border:1px solid #d3d0cc;border-radius:5px"></div>
<div style="position:absolute;left:581px;top:53px;width:1px;height:32px;background:#ebe9e6;"></div>
<div style="position:absolute;left:598px;top:53px;width:1px;height:32px;background:#ebe9e6;"></div>
<div style="position:absolute;left:582.5px;top:68px;width:14px;height:2px;background:#333;"></div>
<div style="position:absolute;left:599.5px;top:68px;width:14px;height:2px;background:#333;"></div>
<div style="position:absolute;left:605.5px;top:62px;width:2px;height:14px;background:#333;"></div>
<div id="t39" style="position:absolute;left:493.3px;top:62.76px;font-size:12.1px;line-height:12.1px;font-weight:400;color:#454545;white-space:nowrap;transform:scaleX(0.8313);transform-origin:0 0;">X:</div>
<div id="t40" style="position:absolute;left:513.4px;top:62.76px;font-size:12.1px;line-height:12.1px;font-weight:400;color:#1e1e1e;white-space:nowrap;transform:scaleX(0.8641);transform-origin:0 0;">14,193</div>
<div style="position:absolute;left:636px;top:52px;width:108px;height:32px;background:#fff;border:1px solid #d3d0cc;border-radius:5px"></div>
<div style="position:absolute;left:712px;top:53px;width:1px;height:32px;background:#ebe9e6;"></div>
<div style="position:absolute;left:729px;top:53px;width:1px;height:32px;background:#ebe9e6;"></div>
<div style="position:absolute;left:713.5px;top:68px;width:14px;height:2px;background:#333;"></div>
<div style="position:absolute;left:730.5px;top:68px;width:14px;height:2px;background:#333;"></div>
<div style="position:absolute;left:736.5px;top:62px;width:2px;height:14px;background:#333;"></div>
<div id="t41" style="position:absolute;left:623.3px;top:62.76px;font-size:12.1px;line-height:12.1px;font-weight:400;color:#454545;white-space:nowrap;transform:scaleX(0.8655);transform-origin:0 0;">Y:</div>
<div id="t42" style="position:absolute;left:643.6px;top:62.76px;font-size:12.1px;line-height:12.1px;font-weight:400;color:#1e1e1e;white-space:nowrap;transform:scaleX(0.8707);transform-origin:0 0;">143,506</div>
<div style="position:absolute;left:766px;top:52px;width:102px;height:32px;background:#fff;border:1px solid #d3d0cc;border-radius:5px"></div>
<div style="position:absolute;left:836px;top:53px;width:1px;height:32px;background:#ebe9e6;"></div>
<div style="position:absolute;left:853px;top:53px;width:1px;height:32px;background:#ebe9e6;"></div>
<div style="position:absolute;left:837.5px;top:68px;width:14px;height:2px;background:#333;"></div>
<div style="position:absolute;left:854.5px;top:68px;width:14px;height:2px;background:#333;"></div>
<div style="position:absolute;left:860.5px;top:62px;width:2px;height:14px;background:#333;"></div>
<div id="t43" style="position:absolute;left:753.2px;top:62.76px;font-size:12.1px;line-height:12.1px;font-weight:400;color:#454545;white-space:nowrap;transform:scaleX(0.8123);transform-origin:0 0;">L:</div>
<div id="t44" style="position:absolute;left:772.2px;top:62.76px;font-size:12.1px;line-height:12.1px;font-weight:400;color:#1e1e1e;white-space:nowrap;transform:scaleX(0.8729);transform-origin:0 0;">171,892</div>
<div style="position:absolute;left:929px;top:52px;width:103px;height:32px;background:#fff;border:1px solid #d3d0cc;border-radius:5px"></div>
<div style="position:absolute;left:1000px;top:53px;width:1px;height:32px;background:#ebe9e6;"></div>
<div style="position:absolute;left:1017px;top:53px;width:1px;height:32px;background:#ebe9e6;"></div>
<div style="position:absolute;left:1001.5px;top:68px;width:14px;height:2px;background:#333;"></div>
<div style="position:absolute;left:1018.5px;top:68px;width:14px;height:2px;background:#333;"></div>
<div style="position:absolute;left:1024.5px;top:62px;width:2px;height:14px;background:#333;"></div>
<div id="t45" style="position:absolute;left:914.5px;top:62.76px;font-size:12.1px;line-height:12.1px;font-weight:400;color:#454545;white-space:nowrap;transform:scaleX(0.9204);transform-origin:0 0;">H:</div>
<div id="t46" style="position:absolute;left:935.6px;top:62.76px;font-size:12.1px;line-height:12.1px;font-weight:400;color:#1e1e1e;white-space:nowrap;transform:scaleX(0.8909);transform-origin:0 0;">82,004</div>
<svg style="position:absolute;left:884px;top:60px" width="18" height="18" viewBox="0 0 18 18"><rect x="2.5" y="8" width="10" height="8" rx="0.8" fill="#000"/><path d="M9.5 8.5 V5.5 a3 3 0 0 1 6 0 V6.5" fill="none" stroke="#000" stroke-width="2.2"/></svg>
<div style="position:absolute;left:1038.4px;top:52.4px;width:57.5px;height:31.5px;background:#f1f0ee;border:1px solid #d3d0cc;border-radius:5px;box-shadow:0 1px 1px rgba(0,0,0,0.08)"></div>
<div id="t47" style="position:absolute;left:1050.5px;top:62.76px;font-size:12.1px;line-height:12.1px;font-weight:400;color:#2e2e2e;white-space:nowrap;transform:scaleX(0.9863);transform-origin:0 0;">mm</div>
<svg style="position:absolute;left:1073px;top:65px" width="13" height="8" viewBox="0 0 13 8"><path d="M1 1 H12 L6.5 7Z" fill="#2e2e2e"/></svg>
<div style="position:absolute;left:1105px;top:52px;width:1px;height:33px;background:#dcd9d5;"></div>
<div style="position:absolute;left:1113.2px;top:52.2px;width:35.3px;height:33.4px;background:#dad6d3;border-radius:5px"></div>
<div style="position:absolute;left:1150.3px;top:52.2px;width:35.3px;height:33.4px;background:#dad6d3;border-radius:5px"></div>
<div style="position:absolute;left:1187.4px;top:52.2px;width:35.3px;height:33.4px;background:#dad6d3;border-radius:5px"></div>
<div style="position:absolute;left:1224.4px;top:52.2px;width:35.3px;height:33.4px;background:#dad6d3;border-radius:5px"></div>
<svg style="position:absolute;left:1123px;top:60px" width="18" height="18" viewBox="0 0 18 18"><path d="M2 3 H14 V9" fill="none" stroke="#000" stroke-width="2"/><path d="M2 7 H10 V9" fill="none" stroke="#000" stroke-width="1.4"/><rect x="2" y="13" width="2" height="2" fill="#000"/><rect x="6" y="13" width="2" height="2" fill="#000"/><path d="M9 14 H12" stroke="#000" stroke-width="2"/><path d="M11.5 11 L15 14 L11.5 17Z" fill="#000"/></svg>
<svg style="position:absolute;left:1160px;top:60px" width="18" height="18" viewBox="0 0 18 18"><path d="M2 3 H8 a6 6 0 0 1 6 6" fill="none" stroke="#000" stroke-width="2"/><path d="M2 7 H6 a4 4 0 0 1 4 3" fill="none" stroke="#000" stroke-width="1.4"/><rect x="2" y="13" width="2" height="2" fill="#000"/><rect x="6" y="13" width="2" height="2" fill="#000"/><path d="M9 14 H12" stroke="#000" stroke-width="2"/><path d="M11.5 11 L15 14 L11.5 17Z" fill="#000"/></svg>
<svg style="position:absolute;left:1197px;top:60px" width="18" height="18" viewBox="0 0 18 18"><defs><linearGradient id="g1" x1="0" y1="0" x2="1" y2="0"><stop offset="0" stop-color="#3aa0e0"/><stop offset="1" stop-color="#000"/></linearGradient></defs><rect x="2" y="4" width="10" height="5" fill="url(#g1)"/><path d="M2 3 H14 V10" fill="none" stroke="#000" stroke-width="1.6"/><rect x="2" y="13" width="2" height="2" fill="#000"/><rect x="6" y="13" width="2" height="2" fill="#000"/><path d="M9 14 H12" stroke="#000" stroke-width="2"/><path d="M11.5 11 L15 14 L11.5 17Z" fill="#000"/></svg>
<svg style="position:absolute;left:1234px;top:60px" width="18" height="18" viewBox="0 0 18 18"><path d="M2 3 H14 V10" fill="none" stroke="#000" stroke-width="1.6"/><path d="M3.5 5 L5 6.3 L3.5 7.6 M6.5 5 L8 6.3 L6.5 7.6 M9.5 5 L11 6.3 L9.5 7.6" fill="none" stroke="#3a9ad9" stroke-width="1"/><rect x="2" y="13" width="2" height="2" fill="#000"/><rect x="6" y="13" width="2" height="2" fill="#000"/><path d="M9 14 H12" stroke="#000" stroke-width="2"/><path d="M11.5 11 L15 14 L11.5 17Z" fill="#000"/></svg>
<svg style="position:absolute;left:1297px;top:59px" width="20" height="20" viewBox="0 0 20 20"><path d="M7.5 3.5 H10 a6.5 6.5 0 0 1 0 13 H7.5" fill="none" stroke="#000" stroke-width="2.4"/><circle cx="4.5" cy="3.3" r="1.6" fill="#2aa02a"/><circle cx="4.5" cy="16.7" r="1.6" fill="#2aa02a"/><path d="M6 7.5 C3 8 3 10 5 10 C7 10 7 12 4 12.5" fill="none" stroke="#000" stroke-width="1.1"/></svg>
<div style="position:absolute;left:1326.4px;top:52.4px;width:33px;height:31.5px;background:#f1f0ee;border:1px solid #d3d0cc;border-radius:5px;box-shadow:0 1px 1px rgba(0,0,0,0.08)"></div>
<svg style="position:absolute;left:1339px;top:62px" width="10" height="14" viewBox="0 0 10 14"><path d="M8.5 1.5 V12.5 L2 7Z" fill="#000"/></svg>
<svg style="position:absolute;left:8px;top:97px" width="18" height="18" viewBox="0 0 18 18"><path d="M2.7 2.6 L14.6 8.6 L10.4 11 L11.2 15.2 L8.3 15.8 L6.6 12.4 L3 15 Z" fill="#dedbd8" stroke="#000" stroke-width="2" stroke-linejoin="round"/></svg>
<svg style="position:absolute;left:7px;top:129px" width="18" height="18" viewBox="0 0 18 18"><rect x="3.4" y="3.4" width="4.8" height="4.8" fill="#fff" stroke="#000" stroke-width="1.9"/><path d="M8.6 3 L15 2" stroke="#666" stroke-width="0.8"/><path d="M3 8.6 L2 15" stroke="#666" stroke-width="0.8"/><path d="M11 9.6 L15.9 12.7 L11.6 15.9 L12.4 12.7Z" fill="#000"/></svg>
<svg style="position:absolute;left:7px;top:162px" width="18" height="18" viewBox="0 0 18 18"><rect x="3" y="3" width="12" height="12" rx="1.5" fill="#f0198c" stroke="#000" stroke-width="1.7"/></svg>
<svg style="position:absolute;left:7px;top:194px" width="18" height="18" viewBox="0 0 18 18"><circle cx="9" cy="9" r="6.1" fill="#f25aa7" stroke="#000" stroke-width="1.7"/></svg>
<svg style="position:absolute;left:7px;top:227px" width="18" height="18" viewBox="0 0 18 18"><path d="M6.2 2 L11 4.8 L10.2 10.5 L4 11.5 L1.8 6.5 Z" fill="#f07ab8" stroke="#000" stroke-width="1.5" stroke-linejoin="round"/><path d="M12.2 5.6 L13.6 8.3 L16.6 8.5 L14.4 10.6 L15.2 13.8 L12.2 12.3 L9.5 14.1 L9.8 10.9 L7.6 8.9 L10.8 8.3Z" fill="#f7c2dd" stroke="#000" stroke-width="1.4" stroke-linejoin="round"/></svg>
<svg style="position:absolute;left:7px;top:258px" width="18" height="18" viewBox="0 0 18 18"><path d="M9 1.5 L15.7 5 L15.7 12.6 L9 16.3 L2.3 12.6 L2.3 5Z" fill="#000"/><path d="M9 3.4 L13.6 5.8 L9 8.2 L4.4 5.8Z" fill="#f7c7e0"/><path d="M3.8 7.2 L8.2 9.5 L8.2 14.3 L3.8 11.9Z" fill="#e8197f"/><path d="M14.2 7.2 L9.8 9.5 L9.8 14.3 L14.2 11.9Z" fill="#f07ab8"/></svg>
<svg style="position:absolute;left:7px;top:291px" width="18" height="18" viewBox="0 0 18 18"><path d="M12.4 14.3 C15.5 11.8 15.8 7.4 13.2 4.8 C10.6 2.2 6.4 2.4 4 5 C1.8 7.5 2.4 11.4 5.2 12.9 C7.6 14.2 10.6 13 11.2 10.4 C11.7 8.2 10.2 6.3 8.2 6.5 C6.6 6.7 6 8.4 6.8 9.6" fill="none" stroke="#000" stroke-width="2.1" stroke-linecap="round"/></svg>
<svg style="position:absolute;left:7px;top:322px" width="18" height="19" viewBox="0 0 18 19"><circle cx="2.8" cy="3.6" r="1.7" fill="#1f9a2f"/><rect x="1.2" y="11" width="3.6" height="3.6" fill="#1f9a2f"/><path d="M2.9 4.5 V11" stroke="#1f9a2f" stroke-width="0.9"/><path d="M3.4 10.2 C5 6 8.5 3.5 12.5 3.2" fill="none" stroke="#555" stroke-width="0.9"/><path d="M17 9.6 L13.6 6.4 L9.2 9 L7.8 13.8 L5.8 16.2 L6.6 17 L9 15 L13.6 13.6Z" fill="#000"/><circle cx="11.6" cy="11.4" r="1.1" fill="#f6f5f4"/><path d="M6.3 16.5 L11.4 11.6" stroke="#f6f5f4" stroke-width="0.6"/></svg>
<svg style="position:absolute;left:7px;top:355px" width="18" height="18" viewBox="0 0 18 18"><path d="M4.5 1.5 C1.5 1.8 1.2 4 3.8 4.8 C6.5 5.6 6.5 7.5 3 8.5 C1.5 9 1.8 10.2 3.5 10.5" fill="none" stroke="#1f9a2f" stroke-width="1.4"/><path d="M3 16 L4.6 12 L7 14.4Z" fill="#1f9a2f"/><path d="M5.4 11.4 L13.2 3.6 L16.4 6.8 L8.6 14.6Z" fill="#000"/><path d="M12.4 4.4 L15.6 7.6" stroke="#f6f5f4" stroke-width="0.8"/></svg>
<svg style="position:absolute;left:7px;top:387px" width="18" height="18" viewBox="0 0 18 18"><path d="M4.5 2.2 C7 2.2 6.8 4.4 4.6 5 C2.4 5.6 2.6 7.6 5.4 7.8" fill="none" stroke="#1f9a2f" stroke-width="1.4"/><path d="M1.8 16.6 C2.2 14.4 3.4 12.9 5.5 12.8 L6.9 14.2 C6.4 16 4.2 16.8 1.8 16.6Z" fill="#1f9a2f"/><path d="M6.4 12.2 L15.9 2.6 L16.8 3.4 L7.6 13.4Z" fill="#000"/><path d="M5.4 12.4 L8.2 11.2 L8.2 14.2Z" fill="#000"/></svg>
<svg style="position:absolute;left:7px;top:418px" width="18" height="18" viewBox="0 0 18 18"><path fill-rule="evenodd" d="M0.9 15.8 L4.9 5 H8.9 L12.9 15.8 H9.6 L8.9 13.6 H4.9 L4.2 15.8Z M5.5 11.3 H8.3 L6.9 7.4Z" fill="#000"/></svg>
<div style="position:absolute;left:22.3px;top:420px;width:1.8px;height:15.5px;background:#1f9a2f;"></div>
<svg style="position:absolute;left:7px;top:452px" width="18" height="18" viewBox="0 0 18 18"><defs><linearGradient id="gr" x1="0" y1="0" x2="1" y2="1"><stop offset="0" stop-color="#2a9be0"/><stop offset="1" stop-color="#000"/></linearGradient></defs><rect x="1.6" y="1.6" width="14.8" height="14.8" fill="url(#gr)" stroke="#000" stroke-width="1.3"/><rect x="2.7" y="2.7" width="12.6" height="12.6" fill="none" stroke="#fff" stroke-width="0.9"/></svg>
<svg style="position:absolute;left:7px;top:484px" width="18" height="18" viewBox="0 0 18 18"><defs><radialGradient id="mg" cx="0.5" cy="0.5" r="0.5"><stop offset="0" stop-color="#ffffff"/><stop offset="0.55" stop-color="#8cc4ea"/><stop offset="1" stop-color="#eaf4fb"/></radialGradient></defs><rect x="1.6" y="1.6" width="14.8" height="14.8" fill="url(#mg)" stroke="#000" stroke-width="1.3"/><rect x="2.7" y="2.7" width="12.6" height="12.6" fill="none" stroke="#fff" stroke-width="0.7"/><path d="M9 2 C5.5 5.5 6 7.5 9 9 C12 10.5 12.5 12.5 9 16 M2 9 C5.5 12.5 7.5 12 9 9 C10.5 6 12.5 5.5 16 9" fill="none" stroke="#000" stroke-width="1.3"/></svg>
<svg style="position:absolute;left:7px;top:516px" width="18" height="18" viewBox="0 0 18 18"><path d="M4 1.6 C3 3.2 1.6 4.6 1.6 6.1 a2.4 2.4 0 0 0 4.8 0 C6.4 4.6 5 3.2 4 1.6Z" fill="#2b9ad8"/><path d="M15.8 2.2 a1.9 1.9 0 0 0 -2.7 0 L11.4 3.9 L10.4 2.9 L9.1 4.2 L10.1 5.2 L4.3 11 C3.6 11.7 3.3 13.3 3.5 14.6 C4.8 14.8 6.4 14.5 7.1 13.8 L12.9 8 L13.9 9 L15.2 7.7 L14.2 6.7 L15.8 4.9 a1.9 1.9 0 0 0 0 -2.7Z" fill="#000"/><path d="M5.2 11.6 L10.9 5.9 L12.1 7.1 L6.4 12.8 C5.9 13.3 5.2 13.4 4.9 13.1 C4.6 12.8 4.7 12.1 5.2 11.6Z" fill="#f6f5f4"/></svg>
<svg style="position:absolute;left:7px;top:548px" width="18" height="18" viewBox="0 0 18 18"><path d="M9.4 1.6 L16.2 8.2 L10.2 14.2 L3.6 7.6Z" fill="#000"/><path d="M5.8 7.4 L9.4 3.8 L13.2 7.6Z" fill="#f6f5f4"/><path d="M3.8 9.6 C2.6 11.4 1.4 12.6 1.4 14 a2.4 2.4 0 0 0 4.8 0 C6.2 12.6 5 11.4 3.8 9.6Z" fill="#2b9ad8"/></svg>
<svg style="position:absolute;left:7px;top:582px" width="18" height="18" viewBox="0 0 18 18"><path d="M1.7 15 V8.8 C4.2 8.8 5.6 6.8 7.4 4.6 C9.2 2.6 12.2 1.8 14.6 3.6 L15 4.8 C13.2 4.6 11.6 5.6 11.4 7.2 C11.3 8.6 12.6 9.6 14.4 9 L16.3 8.8 V15Z" fill="#000"/></svg>
<svg style="position:absolute;left:7px;top:613px" width="18" height="18" viewBox="0 0 18 18"><rect x="6.9" y="8.8" width="9.1" height="6.9" rx="1.4" fill="#000"/><path d="M8.8 8 H14.6 L13.6 5.8 H9.8Z" fill="#000"/><circle cx="12" cy="3.9" r="1.2" fill="#000"/><g fill="#777"><circle cx="3.2" cy="3" r="0.9"/><circle cx="2.3" cy="5.8" r="1"/><circle cx="4.8" cy="5" r="0.8"/><circle cx="6.4" cy="3.4" r="0.7"/><circle cx="3.8" cy="8.2" r="1.1"/><circle cx="6.3" cy="6.6" r="0.7"/></g></svg>
<svg style="position:absolute;left:7px;top:645px" width="18" height="18" viewBox="0 0 18 18"><path d="M12.2 2.2 L16.2 6.2 L11.2 11.2 L7.2 7.2Z" fill="#000"/><path d="M6.6 7.8 L10.6 11.8 L8.5 13.9 L4.5 9.9Z" fill="#8a8a8a"/><rect x="1.6" y="14.4" width="3.6" height="1.8" fill="#000"/><rect x="8.6" y="14.4" width="7.6" height="1.8" fill="#000"/></svg>
<svg style="position:absolute;left:7px;top:678px" width="18" height="18" viewBox="0 0 18 18"><path d="M2 3.2 C4.5 1.2 6.2 2.5 7.2 5.2 C8.2 8 9.2 10.2 12 11.2" fill="none" stroke="#000" stroke-width="1.9"/><path d="M11 7.6 L16.6 11.3 L11.6 15.2 Z" fill="#000"/></svg>
<div style="position:absolute;left:35.4px;top:90.2px;width:15.6px;height:23.6px;background:#f3f2f0;border:1px solid #d8d5d1;border-radius:5px"></div>
<svg style="position:absolute;left:37px;top:94px" width="14" height="18" viewBox="0 0 14 18"><rect x="1.8" y="7.8" width="10.4" height="8.2" rx="0.6" fill="#000"/><path d="M3.8 8 V5.5 a3.2 3.2 0 0 1 6.4 0 V8" fill="none" stroke="#000" stroke-width="2.1"/></svg>
<svg style="position:absolute;left:293px;top:108px" width="14" height="8" viewBox="0 0 14 8"><path d="M2 1.5 H12 L7 7Z" fill="#555"/></svg>
<svg style="position:absolute;left:46px;top:160px" width="7" height="12" viewBox="0 0 7 12"><path d="M1.5 1 V11 L6 6Z" fill="#555"/></svg>
<div style="position:absolute;left:1299.6px;top:90.4px;width:15.6px;height:23.6px;background:#f3f2f0;border:1px solid #d8d5d1;border-radius:5px"></div>
<svg style="position:absolute;left:1299px;top:94px" width="18" height="18" viewBox="0 0 18 18"><circle cx="8" cy="8" r="7.2" fill="#000"/><path d="M12.6 12.6 L16 16" stroke="#000" stroke-width="2.4" stroke-linecap="round"/><text x="8" y="10.6" font-family="Liberation Sans" font-size="7.5" font-weight="700" fill="#fff" text-anchor="middle">1:1</text></svg>
<div style="position:absolute;left:1299.7px;top:678.4px;width:15.5px;height:23.9px;background:#f3f2f0;border:1px solid #d8d5d1;border-radius:5px"></div>
<svg style="position:absolute;left:1299px;top:680px" width="18" height="22" viewBox="0 0 18 22"><circle cx="9" cy="7.4" r="3.4" fill="#f3f2f0" stroke="#222" stroke-width="1"/><circle cx="4.7" cy="14.9" r="3.4" fill="#2aa02a" stroke="#111" stroke-width="1.1"/><circle cx="13" cy="14.9" r="3.4" fill="#e83a9a" stroke="#111" stroke-width="1.1"/></svg>
<div style="position:absolute;left:1326px;top:240px;width:36px;height:1px;background:#dedbd8;"></div>
<div style="position:absolute;left:1326px;top:324px;width:36px;height:1px;background:#dedbd8;"></div>
<div style="position:absolute;left:1326px;top:408px;width:36px;height:1px;background:#dedbd8;"></div>
<div style="position:absolute;left:1326px;top:527px;width:36px;height:1px;background:#dedbd8;"></div>
<svg style="position:absolute;left:1335px;top:103px" width="18" height="18" viewBox="0 0 18 18"><path d="M1.8 2.8 H8.5 L12.8 7 V15.6 H1.8Z" fill="none" stroke="#000" stroke-width="1.9" stroke-linejoin="round"/><path d="M8 3 V7.5 H12.5" fill="none" stroke="#000" stroke-width="1.5"/><path d="M14 0.5 L14.8 2.3 L16.8 2.4 L15.3 3.6 L15.8 5.5 L14 4.5 L12.2 5.5 L12.7 3.6 L11.2 2.4 L13.2 2.3Z" fill="#2aa02a"/></svg>
<svg style="position:absolute;left:1335px;top:138px" width="18" height="18" viewBox="0 0 18 18"><path d="M1.5 1.6 H6.3 L7.8 3.2 H13.8 V6.2 H4.2 L1.5 15.2Z" fill="#000"/><path d="M4.8 7.5 H16.8 L14 15.2 H1.8Z" fill="#000"/></svg>
<svg style="position:absolute;left:1335px;top:171px" width="18" height="20" viewBox="0 0 18 20"><path d="M9 1.2 V7.5" stroke="#1f9a2f" stroke-width="2"/><path d="M5.4 6.6 H12.6 L9 10.2Z" fill="#1f9a2f"/><path d="M2 18.2 V12.6 L4.6 9.4 H6.4 L4.4 12.2 H13.6 L11.6 9.4 H13.4 L16 12.6 V18.2Z" fill="#000"/><rect x="6" y="14.6" width="6" height="1.4" fill="#f6f5f4"/></svg>
<svg style="position:absolute;left:1335px;top:207px" width="18" height="18" viewBox="0 0 18 18"><rect x="5" y="2.2" width="8" height="1.6" fill="#000"/><path d="M2.6 5 H15.4 a0.8 0.8 0 0 1 0.8 0.8 V10.6 H1.8 V5.8 a0.8 0.8 0 0 1 0.8 -0.8Z" fill="#2a2a2a"/><rect x="5" y="10" width="8" height="5" fill="#000"/></svg>
<svg style="position:absolute;left:1335px;top:255px" width="18" height="18" viewBox="0 0 18 18"><path d="M4.5 2 H11 L15.6 6.5 V16.2 H4.5 V12.5 M4.5 7.5 V2" fill="none" stroke="#000" stroke-width="1.9" stroke-linejoin="round"/><path d="M1 9.8 H8" stroke="#2aa02a" stroke-width="2"/><path d="M7 6.8 L10.5 9.8 L7 12.8Z" fill="#2aa02a"/></svg>
<svg style="position:absolute;left:1335px;top:290px" width="18" height="18" viewBox="0 0 18 18"><path d="M12.2 8 V6.5 L8 2.2 H2 V16.2 H12.2 V13" fill="none" stroke="#000" stroke-width="1.9" stroke-linejoin="round"/><path d="M6.5 10.5 H13.5" stroke="#2aa02a" stroke-width="2"/><path d="M13 7.5 L16.8 10.5 L13 13.5Z" fill="#2aa02a"/></svg>
<svg style="position:absolute;left:1335px;top:340px" width="18" height="18" viewBox="0 0 18 18"><path d="M4 7.3 H10.5 a3.8 3.8 0 0 1 0 7.6 H9.5" fill="none" stroke="#000" stroke-width="2"/><path d="M6.5 3.3 L2.5 7.3 L6.5 11.3" fill="none" stroke="#000" stroke-width="2"/></svg>
<svg style="position:absolute;left:1335px;top:375px" width="18" height="18" viewBox="0 0 18 18"><path d="M14 7.3 H7.5 a3.8 3.8 0 0 0 0 7.6 H8.5" fill="none" stroke="#8c8c8c" stroke-width="2"/><path d="M11.5 3.3 L15.5 7.3 L11.5 11.3" fill="none" stroke="#8c8c8c" stroke-width="2"/></svg>
<svg style="position:absolute;left:1335px;top:423px" width="18" height="20" viewBox="0 0 18 20"><rect x="1" y="1.8" width="11" height="11" fill="#000"/><rect x="5.2" y="7" width="12.2" height="11.2" fill="#f6f5f4"/><rect x="6" y="7.8" width="11" height="10.5" fill="#000"/></svg>
<svg style="position:absolute;left:1335px;top:459px" width="18" height="18" viewBox="0 0 18 18"><path d="M4 1 L11.5 11 M14 1 L6.5 11" stroke="#000" stroke-width="1.8"/><circle cx="4.6" cy="13.3" r="2.4" fill="none" stroke="#000" stroke-width="1.7"/><circle cx="13.4" cy="13.3" r="2.4" fill="none" stroke="#000" stroke-width="1.7"/></svg>
<svg style="position:absolute;left:1335px;top:494px" width="18" height="19" viewBox="0 0 18 19"><rect x="1.6" y="3.8" width="13" height="13.5" fill="none" stroke="#000" stroke-width="1.6"/><rect x="5.5" y="1.6" width="5.2" height="3" fill="#000"/><path d="M3.8 6 H12.4 V13 L10 15.4 H3.8Z" fill="#000"/></svg>
<svg style="position:absolute;left:1335px;top:542.5px" width="18" height="18" viewBox="0 0 18 18"><circle cx="8" cy="8" r="7.2" fill="#000"/><path d="M12.5 12.5 L16 16" stroke="#000" stroke-width="2.4" stroke-linecap="round"/><rect x="4.2" y="4.2" width="7.6" height="7.6" fill="none" stroke="#fff" stroke-width="1.2" stroke-dasharray="1.2 1"/></svg>
<svg style="position:absolute;left:1335px;top:578.5px" width="18" height="18" viewBox="0 0 18 18"><circle cx="8" cy="8" r="7.2" fill="#000"/><path d="M12.5 12.5 L16 16" stroke="#000" stroke-width="2.4" stroke-linecap="round"/><circle cx="6.8" cy="6.8" r="2.6" fill="#fff"/><rect x="7.5" y="7.5" width="5" height="5" fill="#fff" stroke="#000" stroke-width="0.8"/></svg>
<svg style="position:absolute;left:1335px;top:614px" width="18" height="18" viewBox="0 0 18 18"><circle cx="8" cy="8" r="7.2" fill="#000"/><path d="M12.5 12.5 L16 16" stroke="#000" stroke-width="2.4" stroke-linecap="round"/><rect x="5" y="3.5" width="6" height="9" fill="none" stroke="#fff" stroke-width="1.3"/></svg>
<svg style="position:absolute;left:1339px;top:677px" width="10" height="14" viewBox="0 0 10 14"><path d="M2 1 V13 L8.5 7Z" fill="#000"/></svg>
<svg style="position:absolute;left:1289px;top:712px" width="18" height="14" viewBox="0 0 18 14"><path d="M3.8 10 L9 5 L14.2 10" fill="none" stroke="#000" stroke-width="1.9"/></svg>
<svg style="position:absolute;left:1320px;top:711px" width="18" height="14" viewBox="0 0 18 14"><path d="M3.6 4.5 L8.9 9.8 L14.2 4.5" fill="none" stroke="#000" stroke-width="1.9"/></svg>
<div style="position:absolute;left:1345.5px;top:705.4px;width:17px;height:25px;background:#f1f0ee;border:1px solid #d3d0cc;border-radius:5px;box-shadow:0 1px 1px rgba(0,0,0,0.08)"></div>
<svg style="position:absolute;left:1347px;top:712px" width="18" height="14" viewBox="0 0 18 14"><path d="M1 2.9 H15.2 M1 8 H15.2 M1 13 H15.2" stroke="#000" stroke-width="2"/></svg>
<div id="t48" style="position:absolute;left:2.7px;top:736.47px;font-size:12.2px;line-height:12.2px;font-weight:400;color:#2b2b2b;white-space:nowrap;transform:scaleX(0.9675);transform-origin:0 0;">Riempimento:</div>
<div id="t49" style="position:absolute;left:22.9px;top:753.87px;font-size:12.2px;line-height:12.2px;font-weight:400;color:#2b2b2b;white-space:nowrap;transform:scaleX(0.9636);transform-origin:0 0;">Contorno:</div>
<div style="position:absolute;left:91px;top:734px;width:82px;height:16px;background:#ffff00;border-radius:2px"></div>
<div id="t50" style="position:absolute;left:91.5px;top:753.87px;font-size:12.2px;line-height:12.2px;font-weight:700;color:#263238;white-space:nowrap;transform:scaleX(0.9486);transform-origin:0 0;">Non impostato</div>
<div id="t51" style="position:absolute;left:183px;top:753.87px;font-size:12.2px;line-height:12.2px;font-weight:400;color:#2b2b2b;white-space:nowrap;transform:scaleX(0.8659);transform-origin:0 0;">0,265</div>
<div id="t52" style="position:absolute;left:217.5px;top:745.27px;font-size:12.2px;line-height:12.2px;font-weight:400;color:#454545;white-space:nowrap;transform:scaleX(0.8574);transform-origin:0 0;">O:</div>
<div style="position:absolute;left:231.6px;top:734px;width:69px;height:34px;background:#fff;border:1px solid #d3d0cc;border-radius:5px"></div>
<div style="position:absolute;left:268.6px;top:735px;width:1px;height:33px;background:#ebe9e6;"></div>
<div style="position:absolute;left:285.6px;top:735px;width:1px;height:33px;background:#ebe9e6;"></div>
<div style="position:absolute;left:270px;top:750px;width:14px;height:2px;background:#333;"></div>
<div style="position:absolute;left:287px;top:750px;width:14px;height:2px;background:#c8c8c8;"></div>
<div style="position:absolute;left:293px;top:744px;width:2px;height:14px;background:#c8c8c8;"></div>
<div id="t53" style="position:absolute;left:238.4px;top:745.27px;font-size:12.2px;line-height:12.2px;font-weight:400;color:#1e1e1e;white-space:nowrap;transform:scaleX(0.8805);transform-origin:0 0;">100</div>
<div style="position:absolute;left:316.2px;top:742.5px;width:2.8px;height:16px;background:#7396bd;"></div>
<div id="t54" style="position:absolute;left:325.8px;top:745.27px;font-size:12.2px;line-height:12.2px;font-weight:400;color:#2b2b2b;white-space:nowrap;transform:scaleX(0.9286);transform-origin:0 0;">Livello 1</div>
<svg style="position:absolute;left:387px;top:743px" width="18" height="16" viewBox="0 0 18 16"><ellipse cx="8.9" cy="8.7" rx="5.8" ry="3.7" fill="none" stroke="#000" stroke-width="1.9"/><circle cx="8.9" cy="8.7" r="1.9" fill="#000"/><path d="M8.9 1 V4.2 M3 3 L4.8 5.2 M14.8 3 L13 5.2" stroke="#000" stroke-width="1.7"/></svg>
<svg style="position:absolute;left:425px;top:742px" width="18" height="18" viewBox="0 0 18 18"><rect x="1.9" y="8.1" width="10.4" height="7.7" rx="0.5" fill="#000"/><path d="M9.4 8.4 V5.2 a2.8 2.8 0 0 1 5.6 0 V7.4" fill="none" stroke="#000" stroke-width="1.8"/></svg>
<div style="position:absolute;left:450.6px;top:740px;width:1px;height:22px;background:#dedbd8;"></div>
<div id="t55" style="position:absolute;left:512.1px;top:736.87px;font-size:12.2px;line-height:12.2px;font-weight:400;color:#2b2b2b;white-space:nowrap;transform:scaleX(0.9503);transform-origin:0 0;"><b>Tracciato</b> 17 nodi in livello <b>Livello 1</b>. Fai clic nuovamente la selezione per alternare le maniglie di</div>
<div id="t56" style="position:absolute;left:512.1px;top:753.97px;font-size:12.2px;line-height:12.2px;font-weight:400;color:#2b2b2b;white-space:nowrap;transform:scaleX(0.9913);transform-origin:0 0;">ridimensionamento/rotazione.</div>
<div style="position:absolute;left:1066.3px;top:734px;width:1px;height:32px;background:#dedbd8;"></div>
<div id="t57" style="position:absolute;left:1076.8px;top:736.37px;font-size:12.2px;line-height:12.2px;font-weight:400;color:#454545;white-space:nowrap;transform:scaleX(0.8536);transform-origin:0 0;">X:</div>
<div id="t58" style="position:absolute;left:1101px;top:736.37px;font-size:12.2px;line-height:12.2px;font-weight:400;color:#2b2b2b;white-space:nowrap;transform:scaleX(0.8913);transform-origin:0 0;">-91,99</div>
<div id="t59" style="position:absolute;left:1076.8px;top:753.37px;font-size:12.2px;line-height:12.2px;font-weight:400;color:#454545;white-space:nowrap;transform:scaleX(0.9086);transform-origin:0 0;">Y:</div>
<div id="t60" style="position:absolute;left:1101px;top:753.37px;font-size:12.2px;line-height:12.2px;font-weight:400;color:#2b2b2b;white-space:nowrap;transform:scaleX(0.8913);transform-origin:0 0;">-15,24</div>
<div id="t61" style="position:absolute;left:1141.8px;top:745.27px;font-size:12.2px;line-height:12.2px;font-weight:400;color:#454545;white-space:nowrap;transform:scaleX(0.9096);transform-origin:0 0;">Z:</div>
<div style="position:absolute;left:1152.5px;top:734.7px;width:84.7px;height:34px;background:#fff;border:1px solid #d3d0cc;border-radius:5px"></div>
<div style="position:absolute;left:1195.5px;top:735.7px;width:1px;height:33px;background:#ebe9e6;"></div>
<div style="position:absolute;left:1216.8px;top:735.7px;width:1px;height:33px;background:#ebe9e6;"></div>
<div style="position:absolute;left:1199px;top:750px;width:14.5px;height:2px;background:#333;"></div>
<div style="position:absolute;left:1219.5px;top:750px;width:14.8px;height:2px;background:#333;"></div>
<div style="position:absolute;left:1226px;top:743.5px;width:2px;height:15px;background:#333;"></div>
<div id="t62" style="position:absolute;left:1163px;top:745.27px;font-size:12.2px;line-height:12.2px;font-weight:400;color:#1e1e1e;white-space:nowrap;transform:scaleX(0.8959);transform-origin:0 0;">50%</div>
<div id="t63" style="position:absolute;left:1250.4px;top:745.27px;font-size:12.2px;line-height:12.2px;font-weight:400;color:#454545;white-space:nowrap;transform:scaleX(0.8795);transform-origin:0 0;">R:</div>
<div style="position:absolute;left:1261px;top:734.7px;width:90px;height:34px;background:#fff;border:1px solid #d3d0cc;border-radius:5px"></div>
<div style="position:absolute;left:1308.7px;top:735.7px;width:1px;height:33px;background:#ebe9e6;"></div>
<div style="position:absolute;left:1331px;top:735.7px;width:1px;height:33px;background:#ebe9e6;"></div>
<div style="position:absolute;left:1311px;top:750px;width:14.5px;height:2px;background:#333;"></div>
<div style="position:absolute;left:1333px;top:750px;width:14.5px;height:2px;background:#333;"></div>
<div style="position:absolute;left:1339.2px;top:743.5px;width:2px;height:15px;background:#333;"></div>
<div id="t64" style="position:absolute;left:1274px;top:745.27px;font-size:12.2px;line-height:12.2px;font-weight:400;color:#1e1e1e;white-space:nowrap;transform:scaleX(0.9053);transform-origin:0 0;">0,00°</div>
<div style="position:absolute;left:0px;top:766px;width:1366px;height:2px;background:#1c1c1c;"></div>
</body></html>
